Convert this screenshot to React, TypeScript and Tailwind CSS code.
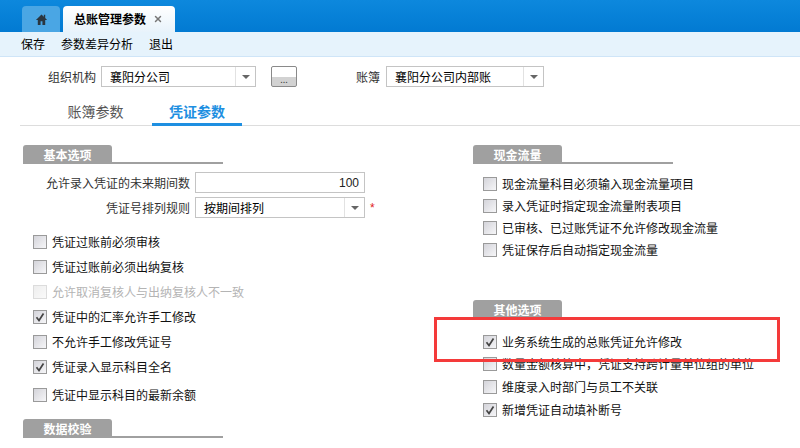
import { X } from 'lucide-react';

const FONT = 'font-["Noto_Sans_CJK_SC","Liberation_Sans",sans-serif]';

function Caret() {
  return (
    <span className="flex w-5 shrink-0 self-stretch items-center justify-center border-l border-[#e2e2e2]">
      <span className="h-0 w-0 border-x-[4px] border-t-[4px] border-x-transparent border-t-[#666]" />
    </span>
  );
}

function Select({ value, width }: { value: string; width: string }) {
  return (
    <div className={`flex h-[21px] items-center border border-[#c4c4c4] bg-white ${width}`}>
      <span className="flex-1 pl-2 text-[12px] leading-none text-black">{value}</span>
      <Caret />
    </div>
  );
}

function SectionTitle({ label }: { label: string }) {
  return (
    <div className="flex h-[19px] w-[200px] border-b-2 border-[#a0a0a0]">
      <div className="flex h-[19px] w-[89px] items-center justify-center rounded-t-[3px] bg-[#a0a0a0] text-[12px] font-bold text-white">
        {label}
      </div>
    </div>
  );
}

function Check({
  label,
  checked,
  disabled,
  className,
}: {
  label: string;
  checked?: boolean;
  disabled?: boolean;
  className?: string;
}) {
  return (
    <div className={`flex h-[16px] items-center gap-[5px] ${className ?? ''}`}>
      <span
        className={`flex h-[14px] w-[14px] shrink-0 items-center justify-center border bg-gradient-to-br ${
          disabled
            ? 'border-[#dcdcdc] from-[#eeeeee] to-[#fafafa]'
            : 'border-[#9a9a9a] from-[#d4d4da] to-[#f6f6f8]'
        }`}
      >
        {checked && (
          <svg viewBox="0 0 12 12" className="h-[12px] w-[12px]">
            <path d="M2.5 6.2 L5 9.5 L9.5 2.5" fill="none" stroke="#444" strokeWidth="1.7" />
          </svg>
        )}
      </span>
      <span className={`whitespace-nowrap text-[12px] leading-none ${disabled ? 'text-[#b4b4b4]' : 'text-[#111]'}`}>
        {label}
      </span>
    </div>
  );
}

export default function App() {
  return (
    <div className={`relative h-[448px] w-[800px] overflow-hidden bg-white ${FONT}`}>
      {/* Top tab strip */}
      <div className="flex h-[32px] items-end gap-[3px] bg-gradient-to-b from-[#0d88dd] to-[#027ad2] pl-[22px]">
        <div className="flex h-[26px] w-[38px] items-center justify-center rounded-t-[4px] bg-[#4aa6e4]">
          <svg viewBox="0 0 14 14" className="h-[13px] w-[13px]">
            <path d="M7 1.5 L1 7.5 H3 V13 H6 V9 H8 V13 H11 V7.5 H13 L11 5.5 V2 H9.5 V4 Z" fill="#2a3640" />
          </svg>
        </div>
        <div className="flex h-[26px] w-[112px] items-center rounded-t-[4px] bg-gradient-to-b from-white to-[#e8f3fb] pl-[11px]">
          <span className="text-[12px] font-bold leading-none text-black">总账管理参数</span>
          <X className="ml-[7px] h-[10px] w-[10px] text-[#777]" strokeWidth={3.5} />
        </div>
      </div>

      {/* Menu bar */}
      <div className="flex h-[25px] items-center gap-[16px] border-b border-[#cfe5f8] bg-[#e6f3fc] pl-[21px] text-[12px] text-black">
        <span>保存</span>
        <span>参数差异分析</span>
        <span>退出</span>
      </div>

      {/* Org and ledger row */}
      <div className="mt-[9px] flex h-[21px] items-center pl-[48px] text-[12px] text-[#333]">
        <span className="w-[53px]">组织机构</span>
        <Select value="襄阳分公司" width="w-[155px]" />
        <button className="ml-[15px] flex h-[21px] w-[26px] items-end justify-center rounded-[2px] border border-[#8a8a8a] bg-gradient-to-b from-white from-50% to-[#d2d2d2] to-50% pb-[2px] text-[9px] leading-none text-[#444]">
          ...
        </button>
        <span className="ml-[59px] w-[30px]">账簿</span>
        <Select value="襄阳分公司内部账" width="w-[158px]" />
      </div>

      {/* Section tabs */}
      <div className="ml-[20px] mt-[13px] flex h-[26px] items-stretch border-b border-[#dddddd] text-[14px]">
        <span className="ml-[47px] flex w-[57px] items-center justify-center pb-[2px] text-[#555]">账簿参数</span>
        <span className="-mb-px ml-[28px] flex w-[90px] items-center justify-center border-b-[3px] border-[#1e8fe1] font-bold text-[#1e8fe1]">
          凭证参数
        </span>
      </div>

      {/* Two columns */}
      <div className="flex pt-[19px]">
        <div className="ml-[23px] w-[450px]">
          <SectionTitle label="基本选项" />
          <div className="mt-[8px] flex h-[21px] items-center">
            <span className="w-[172px] whitespace-nowrap pr-[5px] text-right text-[12px] text-[#333]">允许录入凭证的未来期间数</span>
            <div className="flex h-[21px] w-[170px] items-center justify-end border border-[#c4c4c4] pr-[5px] font-['Liberation_Sans',sans-serif] text-[12px] text-[#222]">
              100
            </div>
          </div>
          <div className="mt-[4px] flex h-[21px] items-center">
            <span className="w-[172px] pr-[5px] text-right text-[12px] text-[#333]">凭证号排列规则</span>
            <Select value="按期间排列" width="w-[170px]" />
            <span className="ml-[5px] font-['Liberation_Sans',sans-serif] text-[12px] leading-none text-[#e02020]">*</span>
          </div>
          <div className="ml-[10px] mt-[16px] flex flex-col gap-[9px]">
            <Check label="凭证过账前必须审核" />
            <Check label="凭证过账前必须出纳复核" />
            <Check label="允许取消复核人与出纳复核人不一致" disabled />
            <Check label="凭证中的汇率允许手工修改" checked />
            <Check label="不允许手工修改凭证号" />
            <Check label="凭证录入显示科目全名" checked />
            <Check label="凭证中显示科目的最新余额" className="mt-[3px]" />
          </div>
          <div className="mt-[16px]">
            <SectionTitle label="数据校验" />
          </div>
        </div>

        <div className="w-[300px]">
          <SectionTitle label="现金流量" />
          <div className="ml-[10px] mt-[12px] flex flex-col gap-[6px]">
            <Check label="现金流量科目必须输入现金流量项目" />
            <Check label="录入凭证时指定现金流量附表项目" />
            <Check label="已审核、已过账凭证不允许修改现金流量" />
            <Check label="凭证保存后自动指定现金流量" />
          </div>
          <div className="mt-[42px]">
            <SectionTitle label="其他选项" />
          </div>
          <div className="ml-[10px] mt-[15px] flex flex-col gap-[7px]">
            <Check label="业务系统生成的总账凭证允许修改" checked />
            <Check label="数量金额核算中，凭证支持跨计量单位组的单位" className="-mt-px" />
            <Check label="维度录入时部门与员工不关联" />
            <Check label="新增凭证自动填补断号" checked />
          </div>
        </div>
      </div>

      {/* Red annotation box */}
      <div className="absolute left-[434px] top-[317px] h-[45px] w-[346px] border-[3px] border-[#f43a3a]" />
    </div>
  );
}
